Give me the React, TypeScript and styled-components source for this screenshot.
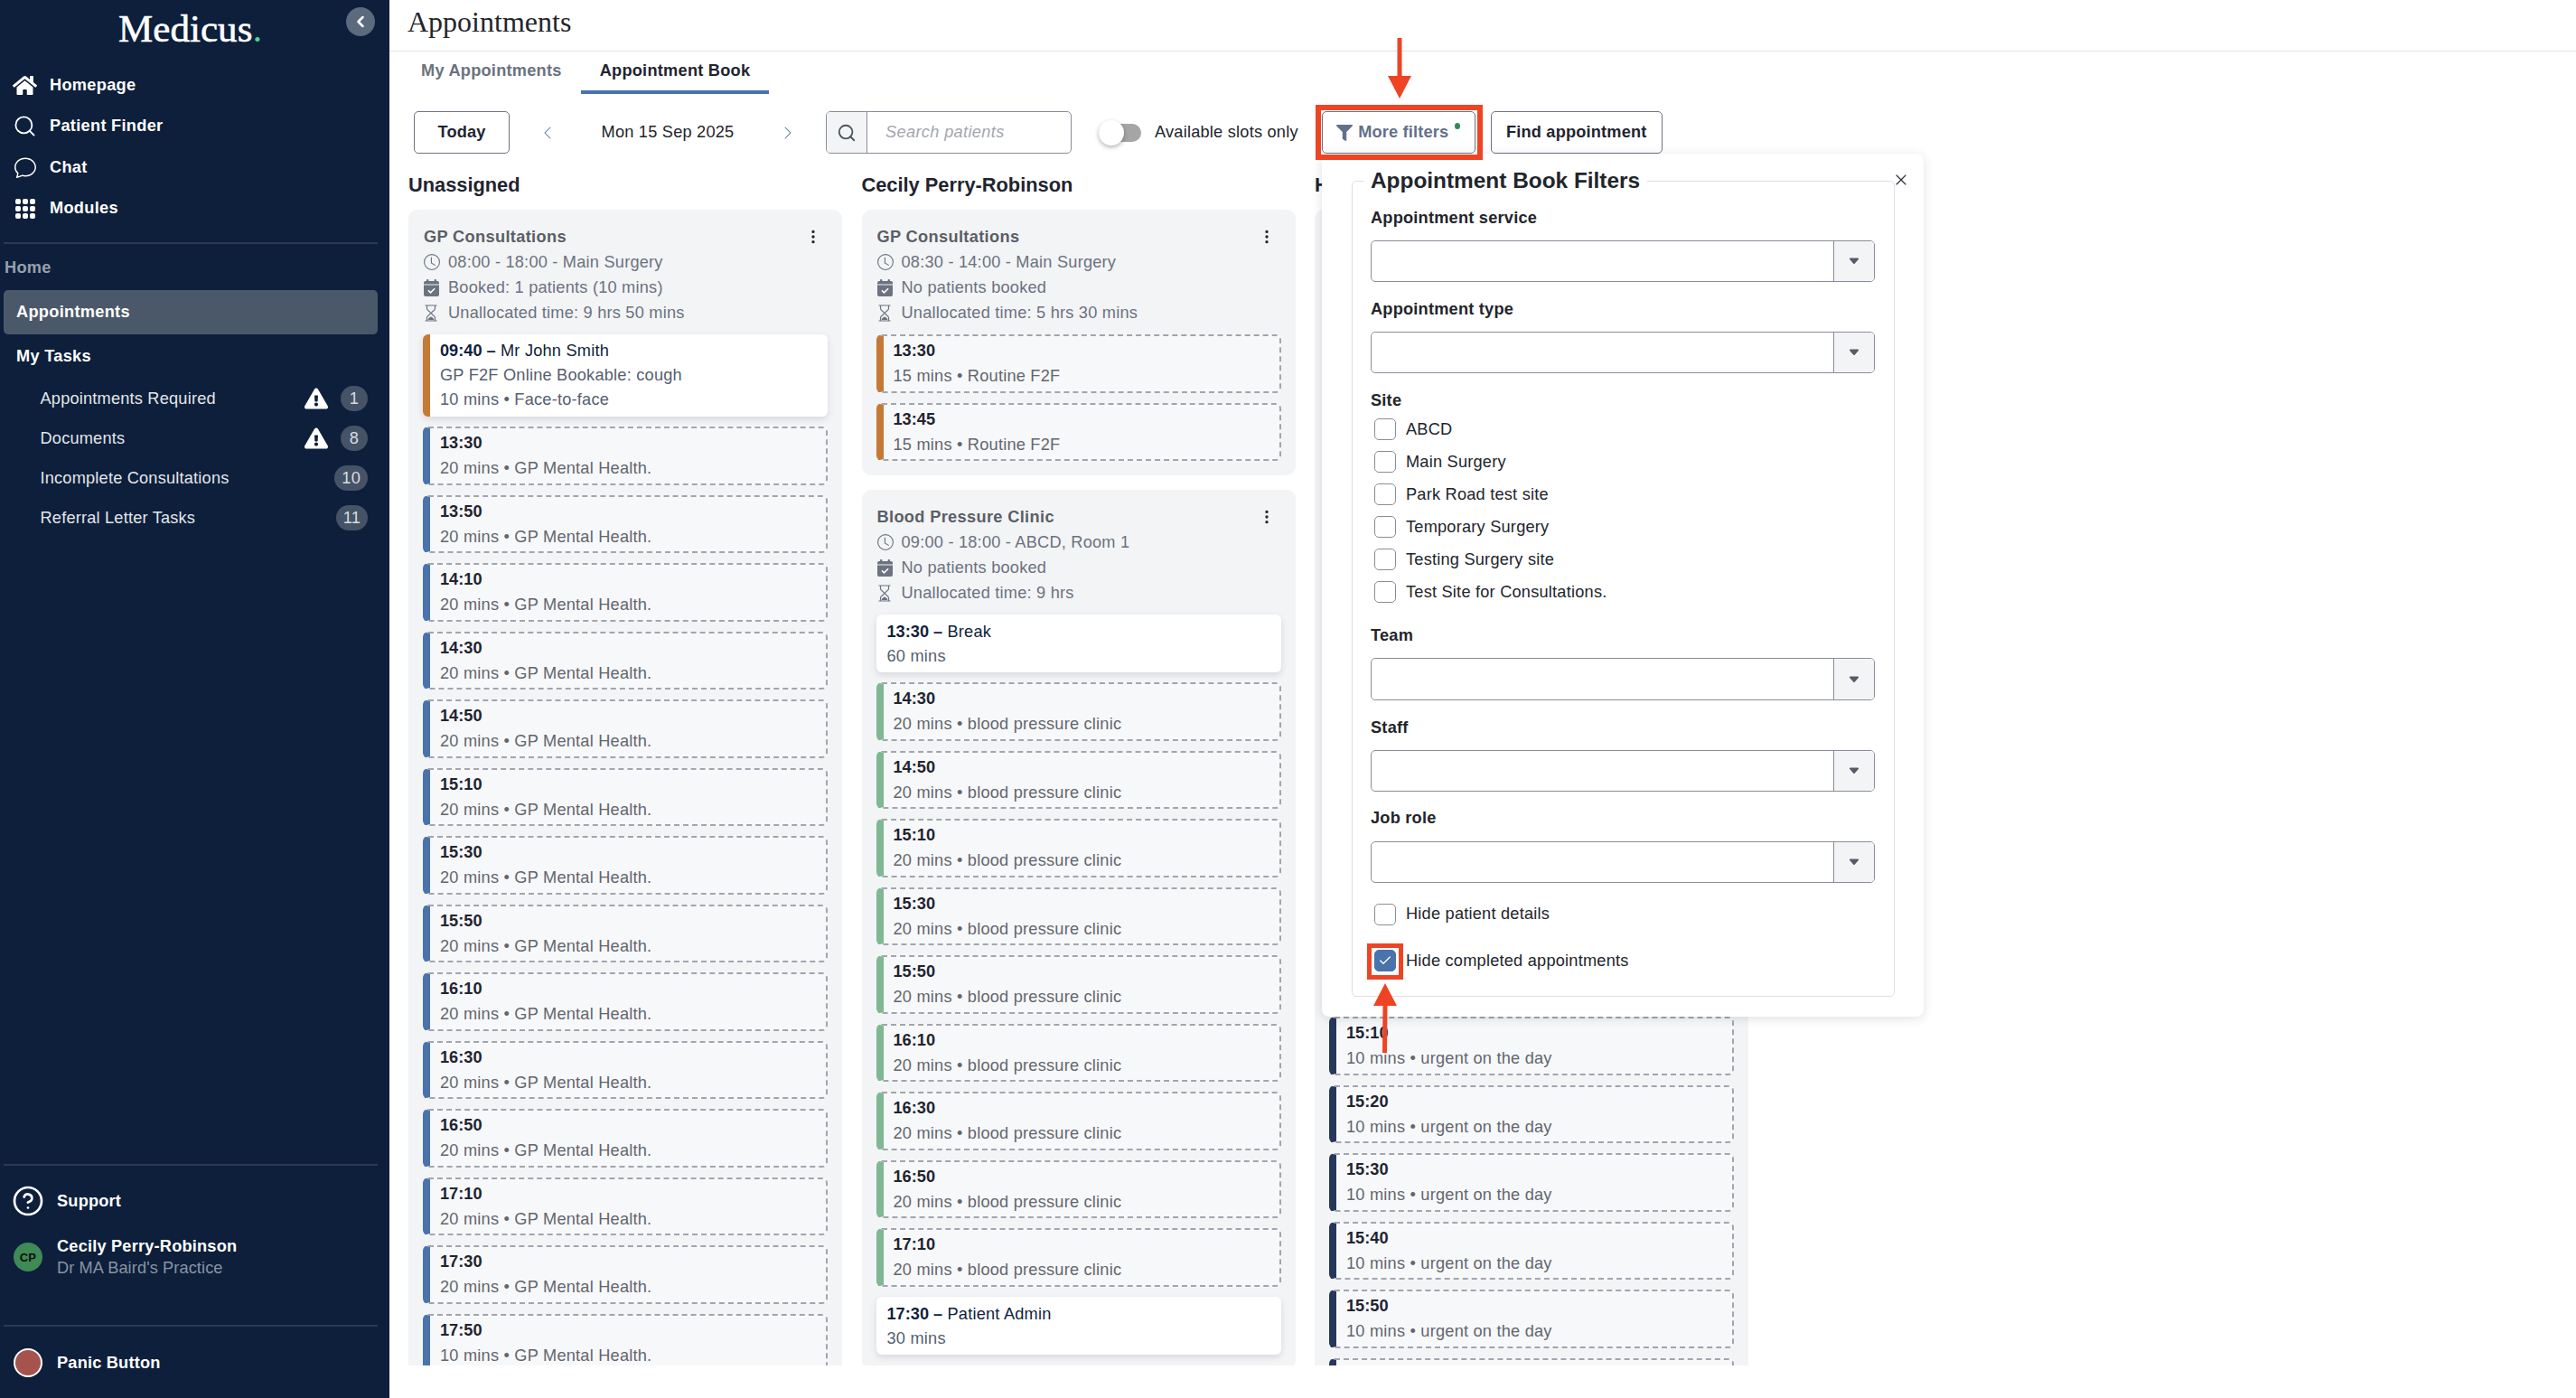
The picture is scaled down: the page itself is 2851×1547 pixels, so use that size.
import React from 'react'
import styled, { createGlobalStyle } from 'styled-components'
import { BsCaretDownFill, BsChat, BsChevronLeft, BsChevronRight, BsClock, BsThreeDotsVertical } from 'react-icons/bs'
import { FaExclamationTriangle, FaFilter, FaHome } from 'react-icons/fa'
import { Check, ChevronLeft, CircleHelp, Search, X } from 'lucide-react'

const BLUE = '#4a72ab'
const ORANGE = '#c47a35'
const GREEN = '#7fb892'
const NAVY = '#26375a'
const RED = '#ee4424'

const GlobalStyle = createGlobalStyle`
  html, body {
    margin: 0;
    padding: 0;
    background: #fff;
    font-family: "Liberation Sans", Arial, sans-serif;
    font-size: 18.2px;
    letter-spacing: 0.22px;
    color: #1f2430;
  }
  * { box-sizing: border-box; }
`

const Shell = styled.div`
  display: flex;
  width: 100vw;
  height: 100vh;
  overflow: hidden;
`

/* sidebar */
const Sidebar = styled.aside`
  position: relative;
  flex: 0 0 431px;
  display: flex;
  flex-direction: column;
  padding: 0 13px 17px 4px;
  background: #0d1f3b;
  color: #fff;
`
const Logo = styled.div`
  height: 72px;
  padding: 8px 0 0 127px;
  font-family: "Liberation Serif", serif;
  font-size: 43px;
  line-height: 48px;
  letter-spacing: 0.05px;
  -webkit-text-stroke: 0.6px #fff;
  span { color: #4cd39a; -webkit-text-stroke: 0; }
`
const Collapse = styled.button`
  position: absolute;
  top: 8px;
  left: 383px;
  width: 32px;
  height: 32px;
  display: flex;
  align-items: center;
  justify-content: center;
  padding: 0;
  border: 0;
  border-radius: 50%;
  background: #5c6a7e;
  color: #fff;
`
const NavItem = styled.div`
  height: 45.3px;
  display: flex;
  align-items: center;
  font-weight: 700;
  letter-spacing: 0.3px;
`
const NavIcon = styled.span`
  flex: 0 0 51px;
  display: flex;
  justify-content: center;
  padding-right: 4px;
`
const Divider = styled.div<{ $top: number }>`
  height: 2px;
  margin-top: ${p => p.$top}px;
  background: #2a3a56;
  flex: none;
`
const SectionLabel = styled.div`
  margin-top: 13px;
  height: 27px;
  line-height: 27px;
  padding-left: 1px;
  font-weight: 700;
  letter-spacing: 0.3px;
  color: #98a0ad;
`
const ActiveItem = styled.div`
  margin-top: 11px;
  height: 49px;
  padding-left: 14px;
  display: flex;
  align-items: center;
  border-radius: 5px;
  background: #4b5869;
  font-weight: 700;
  letter-spacing: 0.3px;
`
const TasksHeading = styled.div`
  margin-top: 9.5px;
  margin-bottom: 11.5px;
  height: 28px;
  line-height: 28px;
  padding-left: 14px;
  font-weight: 700;
  letter-spacing: 0.3px;
`
const TaskRow = styled.div`
  height: 44px;
  display: flex;
  align-items: center;
  justify-content: flex-end;
  gap: 14px;
  padding: 0 11px 0 40.5px;
  color: #e3e6ea;
  letter-spacing: 0.2px;
  > span:first-child { margin-right: auto; }
`
const Badge = styled.span`
  min-width: 30px;
  height: 28px;
  padding: 0 8px;
  display: flex;
  align-items: center;
  justify-content: center;
  border-radius: 14px;
  background: #465366;
  color: #d8dce2;
`
const SidebarFooter = styled.div`
  margin-top: auto;
  display: flex;
  flex-direction: column;
`
const FooterRow = styled.div<{ $top: number; $h: number }>`
  margin-top: ${p => p.$top}px;
  height: ${p => p.$h}px;
  display: flex;
  align-items: center;
  gap: 16px;
  padding-left: 11px;
  font-weight: 700;
  letter-spacing: 0.2px;
`
const Avatar = styled.div`
  width: 32px;
  height: 32px;
  flex: none;
  display: flex;
  align-items: center;
  justify-content: center;
  border-radius: 50%;
  background: #3f8a56;
  color: #06110a;
  font-size: 13px;
  font-weight: 700;
`
const PanicDot = styled.div`
  width: 32px;
  height: 32px;
  flex: none;
  border-radius: 50%;
  border: 2px solid #fff;
  background: #a5534c;
`
const ProfileText = styled.div`
  display: flex;
  flex-direction: column;
  line-height: 24px;
  small {
    font-size: 18.2px;
    font-weight: 400;
    letter-spacing: 0.1px;
    color: #8a93a3;
  }
`

/* main */
const Main = styled.main`
  position: relative;
  flex: 1;
  min-width: 0;
  display: flex;
  flex-direction: column;
`
const TopBar = styled.header`
  flex: none;
  height: 57px;
  padding: 6px 0 0 20px;
  border-bottom: 1.5px solid #e2e3e6;
  font-family: "Liberation Serif", serif;
  font-size: 32px;
  line-height: 36px;
  letter-spacing: 0;
  color: #22252b;
`
const Tabs = styled.nav`
  flex: none;
  display: flex;
  height: 47px;
  padding-left: 14px;
`
const Tab = styled.div<{ $active?: boolean }>`
  padding: 0 21px;
  display: flex;
  align-items: center;
  font-weight: 700;
  letter-spacing: 0.25px;
  border-bottom: 4px solid ${p => (p.$active ? BLUE : 'transparent')};
  color: ${p => (p.$active ? '#1f2430' : '#6b7280')};
`
const Toolbar = styled.div`
  flex: none;
  display: flex;
  align-items: center;
  height: 47px;
  margin: 19px 0 20px;
  padding-left: 27px;
`
const Button = styled.button<{ $muted?: boolean; $width: number; $left?: number }>`
  flex: none;
  display: flex;
  align-items: center;
  justify-content: center;
  width: ${p => p.$width}px;
  height: 47px;
  margin-left: ${p => p.$left ?? 0}px;
  padding: 0;
  border: 1.5px solid #6f7380;
  border-radius: 5px;
  background: #fff;
  font: 700 18.2px "Liberation Sans", Arial, sans-serif;
  letter-spacing: 0.18px;
  color: ${p => (p.$muted ? '#64708a' : '#1f2430')};
`
const FilterDot = styled.span`
  width: 6px;
  height: 7px;
  margin: 0 0 14px 7px;
  border-radius: 50%;
  background: #2f8a55;
`
const DateNav = styled.div`
  flex: none;
  width: 294px;
  margin-left: 28px;
  display: flex;
  align-items: center;
  justify-content: space-between;
  color: ${BLUE};
  span { color: #22252b; }
`
const SearchBox = styled.div`
  flex: none;
  display: flex;
  width: 272px;
  height: 47px;
  margin-left: 28px;
  border: 1.5px solid #8a8d99;
  border-radius: 5px;
  overflow: hidden;
`
const SearchPrefix = styled.div`
  flex: 0 0 45px;
  display: flex;
  align-items: center;
  justify-content: center;
  background: #f3f4f6;
  border-right: 1.5px solid #8a8d99;
  color: #4b5563;
`
const Placeholder = styled.div`
  flex: 1;
  display: flex;
  align-items: center;
  padding-left: 20px;
  font-style: italic;
  letter-spacing: 0.35px;
  color: #a3a6b0;
`
const Toggle = styled.div`
  position: relative;
  flex: none;
  width: 47px;
  height: 20px;
  margin-left: 30px;
  border-radius: 10px;
  background: #a5a5a5;
`
const ToggleKnob = styled.div`
  position: absolute;
  top: -4px;
  left: 0;
  width: 28px;
  height: 28px;
  border-radius: 50%;
  background: #fff;
  box-shadow: 0 2px 5px rgba(0, 0, 0, 0.3);
`
const ToggleLabel = styled.span`
  margin-left: 15px;
  color: #22252b;
`
const Board = styled.div`
  flex: none;
  height: 1321px;
  display: flex;
  gap: 21.5px;
  padding-left: 21px;
  overflow: hidden;
`
const Column = styled.section`
  flex: 0 0 480px;
  display: flex;
  flex-direction: column;
  gap: 16px;
`
const ColumnTitle = styled.h2`
  flex: none;
  height: 30px;
  margin: 0 0 -4px;
  font-size: 21.8px;
  line-height: 30px;
  font-weight: 700;
  letter-spacing: 0;
  color: #1f2430;
`
const Card = styled.div`
  flex: none;
  padding: 16px 16px 5px;
  border-radius: 10px;
  background: #f3f4f6;
`
const CardHead = styled.div`
  min-height: 122px;
`
const CardTitle = styled.div`
  height: 28px;
  display: flex;
  align-items: center;
  justify-content: space-between;
  padding: 0 7px 0 1px;
  font-weight: 700;
  letter-spacing: 0.35px;
  color: #5a5f67;
  svg { color: #26282c; }
`
const Meta = styled.div`
  height: 28px;
  display: flex;
  align-items: center;
  padding-left: 1px;
  color: #6b7280;
`
const MetaIcon = styled.span`
  flex: 0 0 27px;
  display: flex;
  align-items: center;
`
const Slot = styled.div<{ $accent: string }>`
  height: 64.5px;
  margin-bottom: 11px;
  padding: 2px 0 0 11px;
  border: 2px dashed #a2a5af;
  border-left: 8px solid ${p => p.$accent};
  border-radius: 6px;
  background: #f7f8fa;
  line-height: 28px;
  color: #63666e;
  b { display: block; color: #1f2430; letter-spacing: 0; }
`
const Booked = styled.div<{ $accent?: string; $height: number }>`
  height: ${p => p.$height}px;
  margin-bottom: 11px;
  padding: ${p => (p.$accent ? 5 : 6)}px 0 0 ${p => (p.$accent ? 11 : 12)}px;
  border-left: ${p => (p.$accent ? `8px solid ${p.$accent}` : '0')};
  border-radius: 6px;
  background: #fff;
  box-shadow: 0 3px 7px rgba(40, 50, 70, 0.14);
  line-height: 27px;
  color: #56606f;
`
const BookedTitle = styled.div`
  color: #0f1f3d;
  b { font-weight: 700; letter-spacing: 0; }
`

/* filter popover */
const Popover = styled.div`
  position: absolute;
  top: 170px;
  left: 1032px;
  width: 666px;
  height: 955px;
  padding: 15px 33px 0;
  border-radius: 8px;
  background: #fff;
  box-shadow: 0 2px 12px rgba(30, 40, 60, 0.14);
`
const CloseButton = styled.div`
  position: absolute;
  top: 19px;
  left: 631px;
  display: flex;
  color: #2b2e35;
`
const FilterSet = styled.fieldset`
  width: 601px;
  height: 918px;
  margin: 0;
  padding: 0 20px;
  border: 1.5px solid #dcdee2;
  border-radius: 5px;
`
const FilterLegend = styled.legend`
  margin-left: -8px;
  padding: 0 8px;
  font-size: 24.4px;
  line-height: 30px;
  font-weight: 700;
  letter-spacing: 0;
  color: #22252b;
`
const Field = styled.div<{ $top: number; $gap?: number }>`
  margin-top: ${p => p.$top}px;
  > label {
    display: block;
    height: 28px;
    margin-bottom: ${p => p.$gap ?? 10.5}px;
    line-height: 28px;
    font-weight: 700;
    color: #22252b;
  }
`
const Select = styled.div`
  display: flex;
  justify-content: flex-end;
  width: 558px;
  height: 46.5px;
  border: 1.5px solid #8a8d99;
  border-radius: 5px;
  overflow: hidden;
`
const SelectCaret = styled.div`
  flex: 0 0 45px;
  display: flex;
  align-items: center;
  justify-content: center;
  background: #f3f4f6;
  border-left: 1.5px solid #8a8d99;
  color: #565b66;
`
const CheckRow = styled.div<{ $top?: number }>`
  height: 36px;
  margin-top: ${p => p.$top ?? 0}px;
  display: flex;
  align-items: center;
  gap: 11px;
  padding-left: 4px;
  color: #22252b;
`
const Box = styled.span<{ $checked?: boolean }>`
  flex: none;
  width: 24px;
  height: 24px;
  display: flex;
  align-items: center;
  justify-content: center;
  border: 1.5px solid ${p => (p.$checked ? BLUE : '#8a8d99')};
  border-radius: 5px;
  background: ${p => (p.$checked ? BLUE : '#fff')};
  color: #fff;
`

/* red annotations painted on top of the screenshot */
const Highlight = styled.div<{ $x: number; $y: number; $w: number; $h: number; $border: number }>`
  position: absolute;
  left: ${p => p.$x}px;
  top: ${p => p.$y}px;
  width: ${p => p.$w}px;
  height: ${p => p.$h}px;
  border: ${p => p.$border}px solid ${RED};
  pointer-events: none;
`
const Arrow = styled.svg<{ $x: number; $y: number }>`
  position: absolute;
  left: ${p => p.$x}px;
  top: ${p => p.$y}px;
`

const HomeTasks = [
  { label: 'Appointments Required', warn: true, count: 1 },
  { label: 'Documents', warn: true, count: 8 },
  { label: 'Incomplete Consultations', warn: false, count: 10 },
  { label: 'Referral Letter Tasks', warn: false, count: 11 },
]

const sites = ['ABCD', 'Main Surgery', 'Park Road test site', 'Temporary Surgery', 'Testing Surgery site', 'Test Site for Consultations.']

// builds "13:30", "13:50"... from a start and a step in minutes
const times = (start: number, step: number, count: number) =>
  Array.from({ length: count }, (_, i) => {
    const m = start + i * step
    return `${String(Math.floor(m / 60)).padStart(2, '0')}:${String(m % 60).padStart(2, '0')}`
  })

const ModulesIcon = () => (
  <svg width="22" height="22" viewBox="0 0 22 22" fill="#fff">
    {[0, 8, 16].map(y => [0, 8, 16].map(x => <rect key={`${x}-${y}`} x={x} y={y} width="6" height="6" rx="2" />))}
  </svg>
)

const CalendarIcon = () => (
  <svg width="17" height="19" viewBox="0 0 17 19" fill="currentColor">
    <rect x="3" y="0" width="2.4" height="4" rx="1" />
    <rect x="11.6" y="0" width="2.4" height="4" rx="1" />
    <path d="M2 2h13a2 2 0 0 1 2 2v1.4H0V4a2 2 0 0 1 2-2zM0 6.4h17V17a2 2 0 0 1-2 2H2a2 2 0 0 1-2-2z" />
    <path d="M5 12.4l2.5 2.4 4.6-4.6" fill="none" stroke="#fff" strokeWidth="1.6" />
  </svg>
)

const HourglassIcon = () => (
  <svg width="16" height="19" viewBox="0 0 16 19" fill="none" stroke="currentColor" strokeWidth="1.2">
    <path d="M1.5 1h13M1.5 18h13M3.5 1v3.5c0 2.2 4 3.2 4 5s-4 2.8-4 5V18M12.5 1v3.5c0 2.2-4 3.2-4 5s4 2.8 4 5V18" />
    <path d="M4.6 17c0-1.8 2.3-3 3.4-3.4 1.1.4 3.4 1.6 3.4 3.4z" fill="currentColor" stroke="none" />
  </svg>
)

const CardHeader = ({ title, time, booked, left }: { title: string; time: string; booked: string; left: string }) => (
  <CardHead>
    <CardTitle>
      {title}
      <BsThreeDotsVertical size={18} />
    </CardTitle>
    <Meta><MetaIcon><BsClock size={18} /></MetaIcon>{time}</Meta>
    <Meta><MetaIcon><CalendarIcon /></MetaIcon>{booked}</Meta>
    <Meta><MetaIcon><HourglassIcon /></MetaIcon>{left}</Meta>
  </CardHead>
)

const OpenSlot = ({ time, text, accent }: { time: string; text: string; accent: string }) => (
  <Slot $accent={accent}>
    <b>{time}</b>
    {text}
  </Slot>
)

const SelectField = ({ label, top, gap }: { label: string; top: number; gap?: number }) => (
  <Field $top={top} $gap={gap}>
    <label>{label}</label>
    <Select>
      <SelectCaret><BsCaretDownFill size={14} /></SelectCaret>
    </Select>
  </Field>
)

const App = () => (
  <Shell>
    <GlobalStyle />
    <Sidebar>
      <Logo>Medicus<span>.</span></Logo>
      <Collapse><ChevronLeft size={20} strokeWidth={3} /></Collapse>
      <NavItem><NavIcon><FaHome size={27} /></NavIcon>Homepage</NavItem>
      <NavItem><NavIcon><Search size={27} strokeWidth={1.6} /></NavIcon>Patient Finder</NavItem>
      <NavItem><NavIcon><BsChat size={24} /></NavIcon>Chat</NavItem>
      <NavItem><NavIcon><ModulesIcon /></NavIcon>Modules</NavItem>
      <Divider $top={15} />
      <SectionLabel>Home</SectionLabel>
      <ActiveItem>Appointments</ActiveItem>
      <TasksHeading>My Tasks</TasksHeading>
      {HomeTasks.map(t => (
        <TaskRow key={t.label}>
          <span>{t.label}</span>
          {t.warn && <FaExclamationTriangle size={26} color="#fff" />}
          <Badge>{t.count}</Badge>
        </TaskRow>
      ))}
      <SidebarFooter>
        <Divider $top={0} />
        <FooterRow $top={17} $h={44}><CircleHelp size={36} strokeWidth={1.8} style={{ margin: '0 -2px' }} />Support</FooterRow>
        <FooterRow $top={15} $h={50}>
          <Avatar>CP</Avatar>
          <ProfileText>
            Cecily Perry-Robinson
            <small>Dr MA Baird's Practice</small>
          </ProfileText>
        </FooterRow>
        <Divider $top={50} />
        <FooterRow $top={18} $h={44}><PanicDot />Panic Button</FooterRow>
      </SidebarFooter>
    </Sidebar>

    <Main>
      <TopBar>Appointments</TopBar>
      <Tabs>
        <Tab>My Appointments</Tab>
        <Tab $active>Appointment Book</Tab>
      </Tabs>
      <Toolbar>
        <Button $width={106}>Today</Button>
        <DateNav>
          <BsChevronLeft size={16} style={{ marginLeft: 6 }} />
          <span>Mon 15 Sep 2025</span>
          <BsChevronRight size={16} style={{ marginRight: 6 }} />
        </DateNav>
        <SearchBox>
          <SearchPrefix><Search size={22} strokeWidth={2} /></SearchPrefix>
          <Placeholder>Search patients</Placeholder>
        </SearchBox>
        <Toggle><ToggleKnob /></Toggle>
        <ToggleLabel>Available slots only</ToggleLabel>
        <Button $muted $width={170} $left={26}>
          <FaFilter size={18} style={{ marginRight: 6 }} />
          More filters
          <FilterDot />
        </Button>
        <Button $width={190} $left={17}>Find appointment</Button>
      </Toolbar>

      <Board>
        <Column>
          <ColumnTitle>Unassigned</ColumnTitle>
          <Card>
            <CardHeader title="GP Consultations" time="08:00 - 18:00 - Main Surgery" booked="Booked: 1 patients (10 mins)" left="Unallocated time: 9 hrs 50 mins" />
            <Booked $accent={ORANGE} $height={91}>
              <BookedTitle><b>09:40 –</b> Mr John Smith</BookedTitle>
              <div>GP F2F Online Bookable: cough</div>
              <div>10 mins • Face-to-face</div>
            </Booked>
            {times(810, 20, 13).map(t => <OpenSlot key={t} time={t} text="20 mins • GP Mental Health." accent={BLUE} />)}
            <OpenSlot time="17:50" text="10 mins • GP Mental Health." accent={BLUE} />
          </Card>
        </Column>

        <Column>
          <ColumnTitle>Cecily Perry-Robinson</ColumnTitle>
          <Card>
            <CardHeader title="GP Consultations" time="08:30 - 14:00 - Main Surgery" booked="No patients booked" left="Unallocated time: 5 hrs 30 mins" />
            <OpenSlot time="13:30" text="15 mins • Routine F2F" accent={ORANGE} />
            <OpenSlot time="13:45" text="15 mins • Routine F2F" accent={ORANGE} />
          </Card>
          <Card>
            <CardHeader title="Blood Pressure Clinic" time="09:00 - 18:00 - ABCD, Room 1" booked="No patients booked" left="Unallocated time: 9 hrs" />
            <Booked $height={64}>
              <BookedTitle><b>13:30 –</b> Break</BookedTitle>
              <div>60 mins</div>
            </Booked>
            {times(870, 20, 9).map(t => <OpenSlot key={t} time={t} text="20 mins • blood pressure clinic" accent={GREEN} />)}
            <Booked $height={64}>
              <BookedTitle><b>17:30 –</b> Patient Admin</BookedTitle>
              <div>30 mins</div>
            </Booked>
          </Card>
        </Column>

        <Column>
          <ColumnTitle>H</ColumnTitle>
          <Card>
            <CardHead />
            {/* the first ten slots sit behind the filter popover, the last one is cut by the board */}
            {times(810, 10, 10).map(t => <Slot key={t} $accent={NAVY} />)}
            {times(910, 10, 5).map(t => <OpenSlot key={t} time={t} text="10 mins • urgent on the day" accent={NAVY} />)}
            <Slot $accent={NAVY} />
          </Card>
        </Column>
      </Board>

      <Popover>
        <CloseButton><X size={20} strokeWidth={1.4} /></CloseButton>
        <FilterSet>
          <FilterLegend>Appointment Book Filters</FilterLegend>
          <SelectField label="Appointment service" top={12} />
          <SelectField label="Appointment type" top={16} />
          <Field $top={16} $gap={0}><label>Site</label></Field>
          {sites.map(s => <CheckRow key={s}><Box />{s}</CheckRow>)}
          <SelectField label="Team" top={15.9} gap={11.5} />
          <SelectField label="Staff" top={15.9} gap={11.2} />
          <SelectField label="Job role" top={15} gap={11.2} />
          <CheckRow $top={16.8}><Box />Hide patient details</CheckRow>
          <CheckRow $top={15.1}><Box $checked><Check size={16} strokeWidth={2} /></Box>Hide completed appointments</CheckRow>
        </FilterSet>
      </Popover>

      <Highlight $x={1025} $y={116} $w={185} $h={61} $border={6} />
      <Arrow $x={1105} $y={42} width="26" height="67" viewBox="0 0 26 67">
        <path d="M10.5 0h5v42h10.5L13 67 0 42h10.5z" fill={RED} />
      </Arrow>
      <Highlight $x={1082} $y={1044} $w={40} $h={40} $border={5} />
      <Arrow $x={1089} $y={1088} width="26" height="77" viewBox="0 0 26 77">
        <path d="M13 0l13 25H15.5l-.5 52h-5l.5-52H0z" fill={RED} />
      </Arrow>
    </Main>
  </Shell>
)

export default App
